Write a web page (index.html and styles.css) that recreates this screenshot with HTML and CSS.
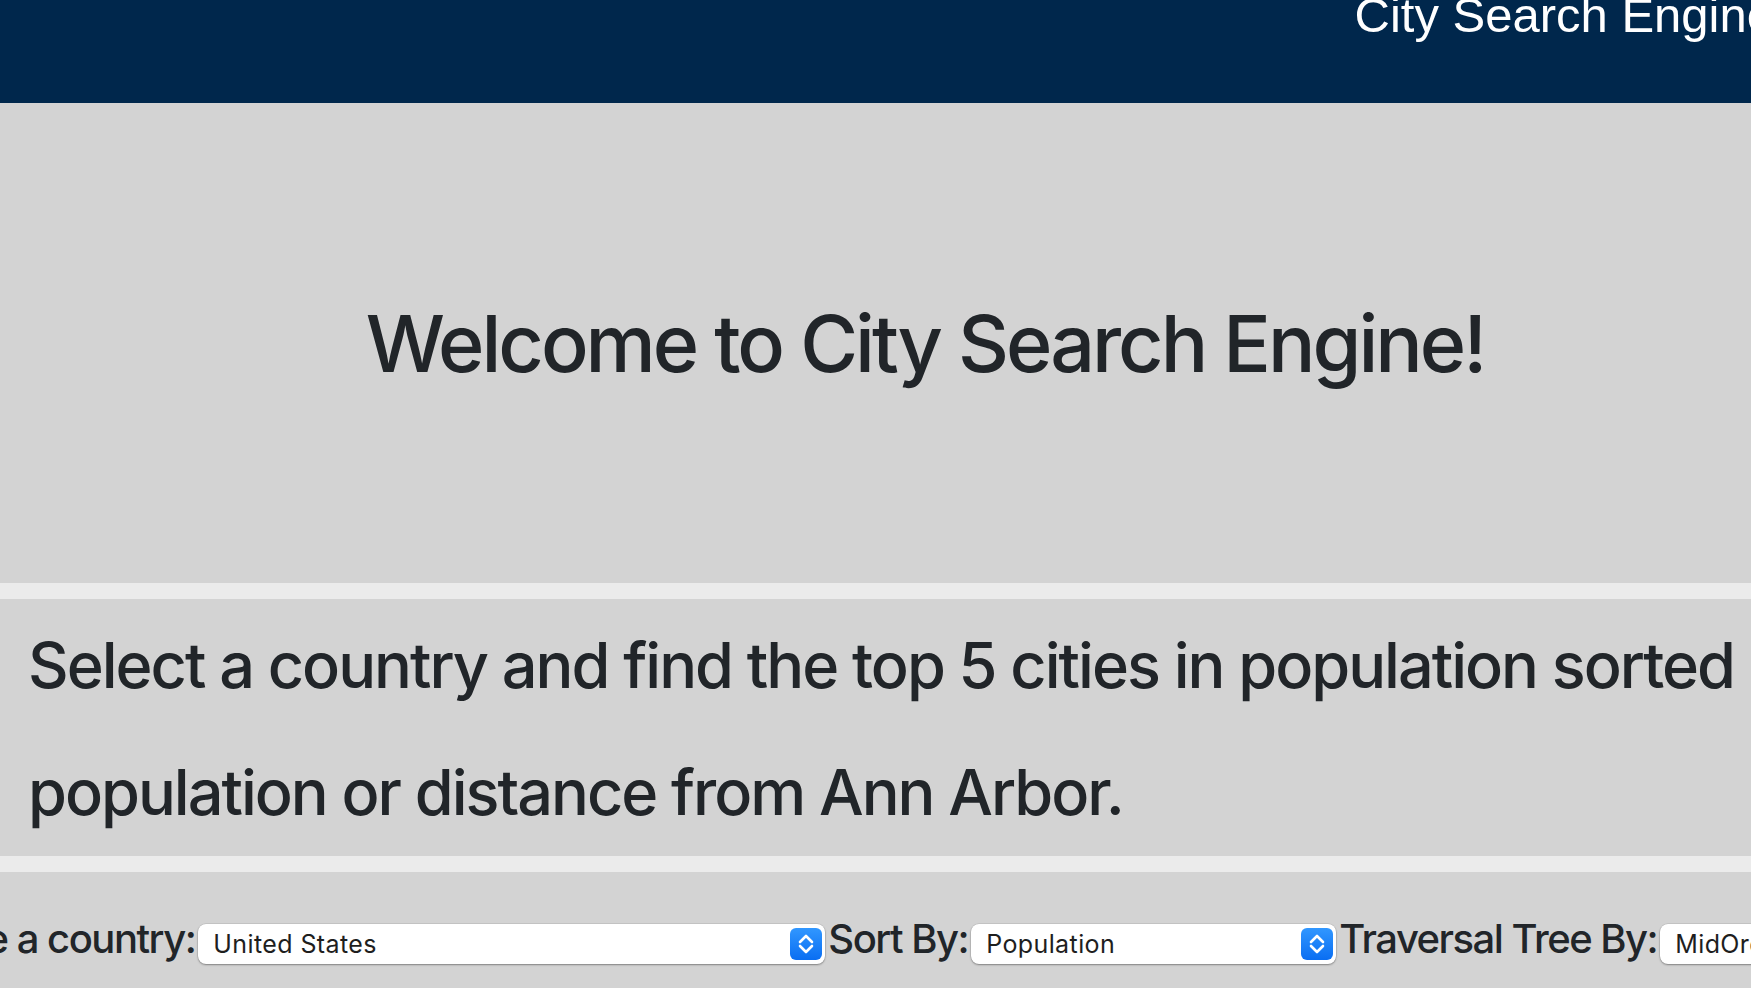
FILE: index.html
```html
<!DOCTYPE html>
<html lang="en">
<head>
<meta charset="utf-8">
<title>City Search Engine</title>
<link rel="stylesheet" href="styles.css">
</head>
<body>
<div class="page">
  <header class="topbar">
    <h1 class="brand">City Search Engine</h1>
  </header>
  <section class="hero">
    <h1 class="hero-title">Welcome to City Search Engine!</h1>
  </section>
  <section class="intro">
    <p class="intro-text">Select a country and find the top 5 cities in population sorted by<br>population or distance from Ann Arbor.</p>
  </section>
  <section class="controls">
    <label class="ctl-label">Choose a country:</label>
    <div class="select select-wide">
      <span class="select-value">United States</span>
      <span class="stepper"><svg viewBox="0 0 32 32" width="32" height="32"><path d="M10 14 L16 8 L22 14 M10 18 L16 24 L22 18" fill="none" stroke="#fff" stroke-width="2.6" stroke-linecap="round" stroke-linejoin="round"/></svg></span>
    </div>
    <label class="ctl-label">Sort By:</label>
    <div class="select select-mid">
      <span class="select-value">Population</span>
      <span class="stepper"><svg viewBox="0 0 32 32" width="32" height="32"><path d="M10 14 L16 8 L22 14 M10 18 L16 24 L22 18" fill="none" stroke="#fff" stroke-width="2.6" stroke-linecap="round" stroke-linejoin="round"/></svg></span>
    </div>
    <label class="ctl-label">Traversal Tree By:</label>
    <div class="select select-narrow">
      <span class="select-value">MidOrder</span>
      <span class="stepper"><svg viewBox="0 0 32 32" width="32" height="32"><path d="M10 14 L16 8 L22 14 M10 18 L16 24 L22 18" fill="none" stroke="#fff" stroke-width="2.6" stroke-linecap="round" stroke-linejoin="round"/></svg></span>
    </div>
  </section>
</div>
</body>
</html>
```
FILE: styles.css
```css
html, body {
  margin: 0;
  padding: 0;
  overflow: hidden;
  background: #ebebeb;
}

.page {
  width: 1850px;
  font-family: Inter, "Noto Sans", sans-serif;
  color: #212529;
}

.topbar {
  background: #00274c;
  height: 103px;
  box-sizing: border-box;
  display: flex;
  justify-content: flex-end;
  padding-right: 76px;
  overflow: hidden;
}

.brand {
  margin: -13px 0 0;
  font-family: "Liberation Sans", Arial, sans-serif;
  font-weight: 400;
  font-size: 49px;
  line-height: 56px;
  color: #ffffff;
  white-space: nowrap;
}

.hero {
  background: #d3d3d3;
  height: 480px;
  display: flex;
  align-items: center;
  justify-content: center;
  margin-bottom: 16px;
}

.hero-title {
  margin: 0;
  font-size: 79px;
  font-weight: 500;
  line-height: 1.2;
  letter-spacing: -3px;
  white-space: nowrap;
}

.intro {
  background: #d3d3d3;
  padding: 3px 28px 0;
  margin-bottom: 16px;
}

.intro-text {
  margin: 0;
  font-size: 63px;
  font-weight: 500;
  line-height: 127px;
  letter-spacing: -2px;
  white-space: nowrap;
}

.controls {
  background: #d3d3d3;
  height: 200px;
  box-sizing: border-box;
  padding-top: 47px;
  display: flex;
  justify-content: center;
  align-items: baseline;
  gap: 3px;
}

.ctl-label {
  font-size: 40px;
  font-weight: 500;
  line-height: 40px;
  letter-spacing: -1.5px;
  white-space: nowrap;
  flex: none;
}

.select {
  position: relative;
  flex: none;
  height: 40px;
  box-sizing: border-box;
  background: #ffffff;
  border-radius: 8px;
  box-shadow: 0 0 0 0.5px rgba(0, 0, 0, 0.12), 0 1px 2px rgba(0, 0, 0, 0.35);
  padding-left: 15px;
  font-size: 25px;
  line-height: 40px;
  letter-spacing: 0.4px;
  color: #1e1e1e;
  white-space: nowrap;
}

.select-wide {
  width: 627px;
}

.select-mid {
  width: 365px;
}

.select-narrow {
  width: 320px;
}

.stepper {
  position: absolute;
  right: 3px;
  top: 4px;
  width: 32px;
  height: 32px;
  border-radius: 6px;
  background: linear-gradient(#3197ff, #0a6ef2);
  display: flex;
}
```
